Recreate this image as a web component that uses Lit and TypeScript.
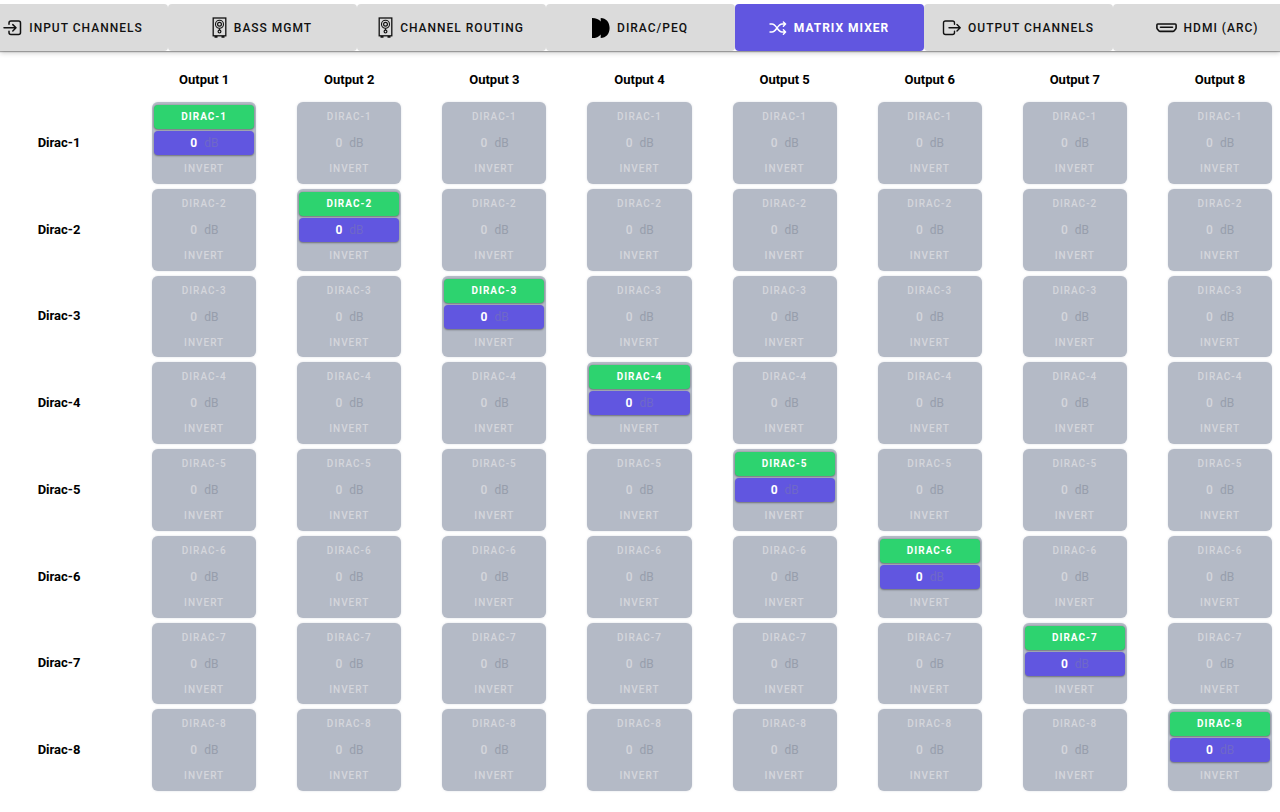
import { LitElement, html, css, svg } from "lit";
import { customElement, property, state } from "lit/decorators.js";
import { classMap } from "lit/directives/class-map.js";

const icons = {
  input: svg`<svg width="19" height="18" viewBox="0 0 19 18" fill="none" stroke="currentColor" stroke-width="1.500" stroke-linecap="round" stroke-linejoin="round">
    <path d="M6 5.200V4Q6 2 8 2H15.500Q17.500 2 17.500 4V13.500Q17.500 15.500 15.500 15.500H8Q6 15.500 6 13.500V12.300"/>
    <path d="M1 8.800H12.800M9.800 5.600L13 8.800L9.800 12"/></svg>`,
  speaker: svg`<svg width="15" height="21" viewBox="0 0 15 21" fill="none" stroke="currentColor">
    <rect x="1.200" y="1" width="12.600" height="17.800" stroke-width="1.300"/>
    <circle cx="7.500" cy="7.300" r="4" stroke-width="1.100"/>
    <circle cx="7.500" cy="7.300" r="1.900" stroke-width="1.200"/>
    <circle cx="7.500" cy="14.600" r="1.400" stroke-width="1.200"/>
    <path d="M7.500 11.300V13" stroke-width="1.200"/>
    <path d="M2.500 19.900H5.500M9.500 19.900H12.500" stroke-width="1.800"/></svg>`,
  dirac: svg`<svg width="18" height="20" viewBox="0 0 18 20" fill="#000">
    <path d="M0 0C4 0 7 1.200 8.700 3.600V0C14 0 17.600 4.300 17.600 10S14 20 8.700 20V16.400C7 18.800 4 20 0 20Z"/></svg>`,
  shuffle: svg`<svg width="18" height="14" viewBox="0 0 18 14" fill="none" stroke="currentColor" stroke-width="1.400" stroke-linecap="round" stroke-linejoin="round">
    <path d="M1 3H3C7.500 3 8.500 11 13 11H16.500M1 11H3C7.500 11 8.500 3 13 3H16.500M14.400 1L16.600 3L14.400 5.200M14.400 8.800L16.600 11L14.400 13.200"/></svg>`,
  output: svg`<svg width="19" height="18" viewBox="0 0 19 18" fill="none" stroke="currentColor" stroke-width="1.400" stroke-linecap="round" stroke-linejoin="round">
    <path d="M12.500 5.200V4Q12.500 2 10.500 2H3.500Q1.500 2 1.500 4V13.500Q1.500 15.500 3.500 15.500H10.500Q12.500 15.500 12.500 13.500V12.300"/>
    <path d="M7 8.800H18M15 5.600L18.200 8.800L15 12"/></svg>`,
  hdmi: svg`<svg width="21" height="10" viewBox="0 0 21 10" fill="none" stroke="currentColor" stroke-linejoin="round" stroke-linecap="round">
    <path d="M1.800 1H19.200Q20.100 1 20.100 1.900V5Q20.100 5.500 19.700 5.900L18 7.900Q17.600 8.400 16.900 8.400H4.100Q3.400 8.400 3 7.900L1.300 5.900Q.9 5.500 .9 5V1.900Q.9 1 1.800 1Z" stroke-width="1.600"/>
    <path d="M4.500 4.200H16.500" stroke-width="1.600"/></svg>`,
};

const tabs = [
  { label: "Input Channels", icon: icons.input },
  { label: "Bass Mgmt", icon: icons.speaker },
  { label: "Channel Routing", icon: icons.speaker },
  { label: "Dirac/PEQ", icon: icons.dirac },
  { label: "Matrix Mixer", icon: icons.shuffle },
  { label: "Output Channels", icon: icons.output },
  { label: "HDMI (ARC)", icon: icons.hdmi },
];

const channels = [1, 2, 3, 4, 5, 6, 7, 8];

@customElement("tab-strip")
export class TabStrip extends LitElement {
  @state() private selected = 4;

  static styles = css`
    :host { display: block; padding-top: 4px; overflow-x: clip; }
    .strip {
      display: flex; justify-content: center; background: #fff;
      box-shadow: 0 1px 1px rgba(0, 0, 0, 0.3), 0 2px 5px rgba(0, 0, 0, 0.2);
      clip-path: inset(0 0 -10px);
    }
    .tab {
      flex: 0 0 189px; height: 47px; box-sizing: border-box; padding: 0;
      display: flex; align-items: center; justify-content: center; gap: 7px;
      border: 0; border-radius: 4px; background: #dbdbdb; color: #111;
      font: 500 12px/16px Roboto, "Liberation Sans", sans-serif;
      letter-spacing: 1px; text-transform: uppercase; white-space: nowrap; cursor: pointer;
    }
    .selected { background: #6156e0; color: #fff; font-weight: 700; }
    svg { display: block; flex: none; }
  `;

  render() {
    return html`<nav class="strip">
      ${tabs.map((t, i) => html`<button
        class=${classMap({ tab: true, selected: i === this.selected })}
        @click=${() => (this.selected = i)}
      >${t.icon}<span>${t.label}</span></button>`)}
    </nav>`;
  }
}

@customElement("mixer-cell")
export class MixerCell extends LitElement {
  @property({ type: Number }) source = 1;
  @property({ type: Boolean }) active = false;
  @state() private inverted = false;

  static styles = css`
    :host { display: block; height: 100%; }
    .cell {
      height: 100%; box-sizing: border-box; padding: 3px 2px 2px;
      display: grid; grid-template-columns: minmax(0, 1fr);
      grid-template-rows: 24px 24px 24px; row-gap: 2px;
      border-radius: 6px; background: #b4bac6; color: #d4d6dc;
      font: 500 10px/16px Roboto, "Liberation Sans", sans-serif; letter-spacing: 1px;
      box-shadow: 0 0 2px rgba(180, 186, 198, 0.5);
    }
    button {
      min-width: 0; padding: 0; border: 0; border-radius: 4px; background: none;
      color: inherit; font: inherit; letter-spacing: inherit;
      text-transform: uppercase; cursor: pointer;
    }
    .gain {
      min-width: 0; display: flex; align-items: center; gap: 6px;
      border-radius: 4px; font-size: 12px;
    }
    input {
      flex: 0 0 44%; min-width: 0; padding: 0; border: 0; outline: 0; background: none;
      color: inherit; font: inherit; letter-spacing: inherit; text-align: right;
    }
    .unit { color: #979eac; font-weight: 400; letter-spacing: 0; }
    .on .route {
      background: #2dd36f; color: #fff; font-weight: 700;
      box-shadow: 0 0 2px rgba(0, 0, 0, 0.3), 0 1px 2px rgba(0, 0, 0, 0.3);
    }
    .on .gain {
      background: #6156e0; color: #fff; font-weight: 700;
      box-shadow: 0 1px 2px rgba(0, 0, 0, 0.4);
    }
    .on .unit { color: #6f68c8; }
    .inverted { color: #fff; }
  `;

  render() {
    return html`<div class=${classMap({ cell: true, on: this.active })}>
      <button class="route" @click=${() => (this.active = !this.active)}>Dirac-${this.source}</button>
      <label class="gain"><input value="0" inputmode="numeric" /><span class="unit">dB</span></label>
      <button
        class=${classMap({ inverted: this.inverted })}
        @click=${() => (this.inverted = !this.inverted)}
      >Invert</button>
    </div>`;
  }
}

@customElement("app-root")
export class AppRoot extends LitElement {
  static styles = css`
    :host {
      display: flex; flex-direction: column; min-height: 100vh; background: #fff; color: #000;
      font: 700 13px/18px Roboto, "Liberation Sans", sans-serif;
    }
    .matrix {
      flex: 1; display: grid; grid-template-columns: repeat(9, minmax(0, 1fr));
      grid-template-rows: 46px; grid-auto-rows: minmax(80px, 1fr);
      gap: 5px 41px; padding: 0 8px 21px 7px;
    }
    thead, tbody, tr { display: contents; }
    th, td { padding: 0; }
    th { display: flex; align-items: center; justify-content: center; }
    .output { padding-top: 11px; }
  `;

  render() {
    return html`<tab-strip></tab-strip>
      <table class="matrix">
        <thead>
          <tr>
            <td></td>
            ${channels.map((c) => html`<th class="output" scope="col">Output ${c}</th>`)}
          </tr>
        </thead>
        <tbody>
          ${channels.map((r) => html`<tr>
            <th scope="row">Dirac-${r}</th>
            ${channels.map((c) => html`<td><mixer-cell .source=${r} .active=${r === c}></mixer-cell></td>`)}
          </tr>`)}
        </tbody>
      </table>`;
  }
}
